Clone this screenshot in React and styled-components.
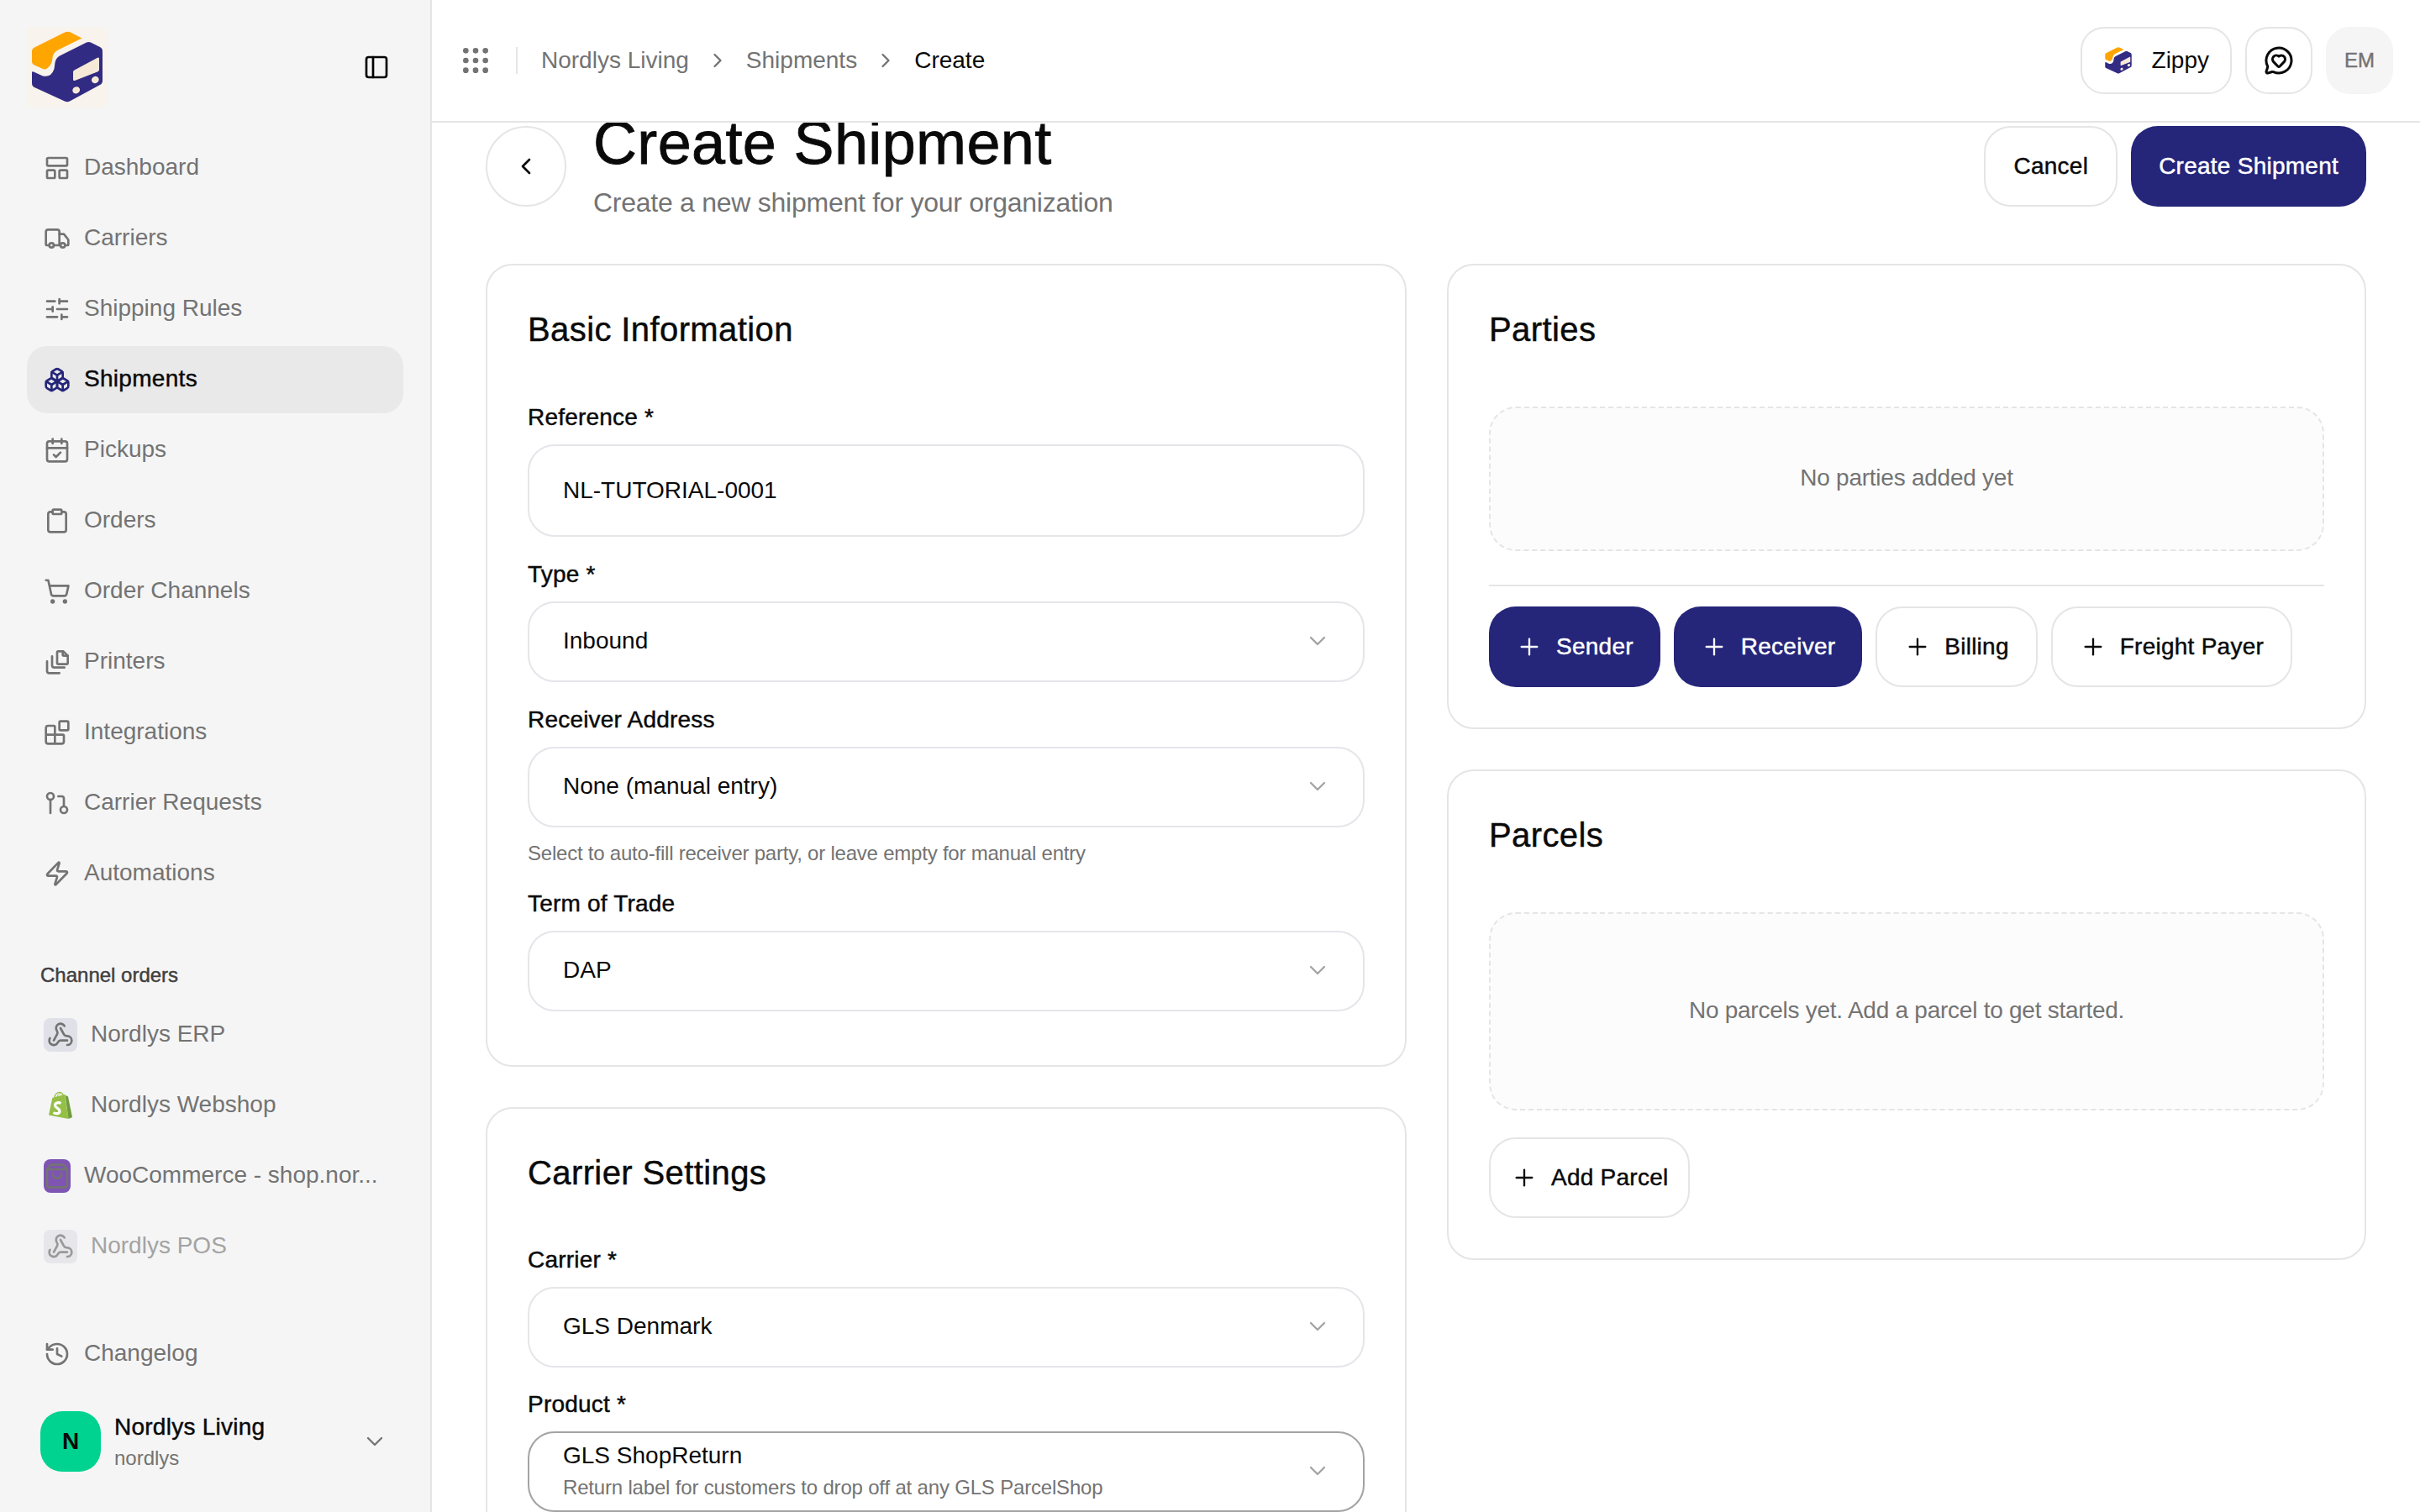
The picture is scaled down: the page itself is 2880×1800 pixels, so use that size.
import React from "react";
import styled, { createGlobalStyle, css } from "styled-components";
import {
  LayoutPanelTop,
  Truck,
  SlidersHorizontal,
  Boxes,
  CalendarCheck,
  Clipboard,
  ShoppingCart,
  Blocks,
  GitPullRequest,
  Zap,
  Webhook,
  ShoppingBag,
  History,
  ChevronDown,
  ChevronRight,
  ChevronLeft,
  PanelLeft,
  Grip,
  MessageCircleHeart,
  Plus,
} from "lucide-react";

const NAVY = "#25257a";
const LINE = "#e5e5e5";
const FIELD_LINE = "#e5e5ea";
const MUTED = "#737373";
const INK = "#0a0a0a";

const medium = css`
  -webkit-text-stroke: 0.45px currentColor;
`;

const GlobalStyle = createGlobalStyle`
  html, body {
    margin: 0;
    background: #fff;
    overflow: hidden;
  }
  * {
    box-sizing: border-box;
  }
  body {
    font-family: "Liberation Sans", Arial, sans-serif;
    color: ${INK};
  }
`;

const Page = styled.div`
  display: flex;
  width: 2880px;
  height: 1800px;
`;

const Sidebar = styled.aside`
  display: flex;
  flex-direction: column;
  flex: 0 0 514px;
  padding: 32px 32px 48px;
  background: #f5f5f5;
  border-right: 2px solid ${LINE};
`;

const LogoRow = styled.div`
  display: flex;
  align-items: center;
  justify-content: space-between;
  height: 96px;
  margin-bottom: 32px;
  padding-right: 16px;
`;

const Nav = styled.nav`
  display: flex;
  flex-direction: column;
  gap: 4px;
`;

const NavItem = styled.div`
  display: flex;
  align-items: center;
  gap: 16px;
  height: 80px;
  padding-left: 20px;
  border-radius: 24px;
  font-size: 28px;
  white-space: nowrap;
  letter-spacing: ${({ $active }) => ($active ? 0.3 : 0)}px;
  color: ${({ $active, $faded }) => ($active ? INK : $faded ? "#a3a3a3" : MUTED)};
  background: ${({ $active }) => ($active ? "#e9e9e9" : "transparent")};
  ${({ $active }) => $active && medium}

  svg {
    flex: none;
    -webkit-text-stroke: 0;
    color: ${({ $active }) => ($active ? NAVY : MUTED)};
  }
`;

const NavLabel = styled.span`
  margin-top: -2px;
`;

const SectionLabel = styled.div`
  margin: 68px 0 18px 16px;
  font-size: 24px;
  line-height: 26px;
  color: #404040;
  ${medium}
`;

const ChannelBadge = styled.span`
  display: flex;
  align-items: center;
  justify-content: center;
  flex: none;
  width: ${({ $w }) => $w ?? 40}px;
  height: 40px;
  border-radius: 8px;
  background: ${({ $bg }) => $bg ?? "transparent"};
  opacity: ${({ $faded }) => ($faded ? 0.7 : 1)};
`;

const Changelog = styled(NavItem)`
  margin-top: auto;
  margin-bottom: 28px;
`;

const OrgRow = styled.div`
  display: flex;
  align-items: center;
  gap: 16px;
  height: 72px;
  padding: 0 18px 0 16px;
  color: ${MUTED};
`;

const OrgAvatar = styled.div`
  display: flex;
  align-items: center;
  justify-content: center;
  flex: none;
  width: 72px;
  height: 72px;
  border-radius: 26px;
  background: #00d390;
  color: ${INK};
  font-size: 28px;
  font-weight: 700;
`;

const OrgText = styled.div`
  flex: 1;
`;

const OrgName = styled.div`
  font-size: 28px;
  line-height: 36px;
  letter-spacing: 0.25px;
  color: ${INK};
  ${medium}
`;

const OrgSlug = styled.div`
  font-size: 24px;
  line-height: 32px;
  margin-top: 3px;
  color: ${MUTED};
`;

const Main = styled.main`
  display: flex;
  flex-direction: column;
  flex: 1;
  min-width: 0;
  height: 1800px;
`;

const Topbar = styled.header`
  display: flex;
  align-items: center;
  flex: 0 0 146px;
  padding: 0 32px;
  border-bottom: 2px solid ${LINE};
`;

const GripIcon = styled(Grip)`
  color: ${MUTED};
`;

const Separator = styled.span`
  width: 2px;
  height: 32px;
  margin: 0 28px;
  background: ${LINE};
`;

const Crumbs = styled.div`
  display: flex;
  align-items: center;
  gap: 20px;
  flex: 1;
  font-size: 28px;
  color: ${MUTED};
`;

const CurrentCrumb = styled.span`
  color: ${INK};
`;

const TopActions = styled.div`
  display: flex;
  align-items: center;
  gap: 16px;
`;

const TopButton = styled.button`
  display: flex;
  align-items: center;
  justify-content: center;
  gap: 22px;
  height: 80px;
  min-width: 80px;
  padding: ${({ $wide }) => ($wide ? "0 25px" : "0")};
  border: 2px solid ${LINE};
  border-radius: 28px;
  background: #fff;
  font: inherit;
  font-size: 28px;
  color: ${INK};
`;

const UserBadge = styled.div`
  display: flex;
  align-items: center;
  justify-content: center;
  width: 80px;
  height: 80px;
  border-radius: 28px;
  background: #f5f5f5;
  font-size: 24px;
  color: ${MUTED};
  ${medium}
`;

const Content = styled.div`
  flex: 1;
  overflow: hidden;
  padding: 0 64px;
`;

const PageHead = styled.div`
  display: flex;
  align-items: center;
  gap: 32px;
  height: 136px;
  margin-top: -16px;
  margin-bottom: 48px;
`;

const BackButton = styled.button`
  display: flex;
  align-items: center;
  justify-content: center;
  flex: none;
  width: 96px;
  height: 96px;
  padding: 0;
  border: 2px solid ${LINE};
  border-radius: 50%;
  background: #fff;
  color: ${INK};
`;

const HeadText = styled.div`
  flex: 1;
  padding-bottom: 2px;
`;

const Title = styled.h1`
  margin: 0;
  font-size: 72px;
  line-height: 80px;
  font-weight: 400;
  letter-spacing: 0.35px;
  -webkit-text-stroke: 0.8px currentColor;
`;

const Subtitle = styled.p`
  margin: 7px 0 0;
  font-size: 32px;
  line-height: 48px;
  letter-spacing: -0.26px;
  color: ${MUTED};
`;

const HeadActions = styled.div`
  display: flex;
  gap: 16px;
`;

const Button = styled.button`
  display: inline-flex;
  align-items: center;
  justify-content: center;
  gap: 16px;
  height: 96px;
  padding: 0 ${({ $pad }) => $pad ?? 32}px 1px;
  border-radius: 32px;
  font: inherit;
  font-size: 28px;
  letter-spacing: 0.25px;
  white-space: nowrap;
  ${medium}
  border: ${({ $primary }) => ($primary ? "none" : `2px solid ${LINE}`)};
  background: ${({ $primary }) => ($primary ? NAVY : "#fff")};
  color: ${({ $primary }) => ($primary ? "#fff" : INK)};

  svg {
    -webkit-text-stroke: 0;
  }
`;

const Columns = styled.div`
  display: grid;
  grid-template-columns: 1096px 1094px;
  gap: 48px;
  align-items: start;
`;

const Column = styled.div`
  display: flex;
  flex-direction: column;
  gap: 48px;
`;

const Card = styled.section`
  padding: 48px;
  border: 2px solid ${LINE};
  border-radius: 32px;
  background: #fff;
`;

const CardTitle = styled.h2`
  margin: 0 0 64px;
  font-size: 40px;
  line-height: 56px;
  font-weight: 400;
  letter-spacing: 0.4px;
  ${medium}
`;

const Fields = styled.div`
  display: flex;
  flex-direction: column;
  gap: ${({ $open }) => ($open ? 31 : 32)}px;
  margin-top: ${({ $open }) => ($open ? -1 : 0)}px;
  padding-bottom: ${({ $open }) => ($open ? 0 : 16)}px;
`;

const Field = styled.div`
  display: flex;
  flex-direction: column;
`;

const Label = styled.label`
  margin-bottom: 19px;
  font-size: 28px;
  line-height: 26px;
  letter-spacing: 0.2px;
  color: ${INK};
  ${medium}
`;

const TextInput = styled.div`
  display: flex;
  align-items: center;
  height: 110px;
  padding: 0 40px;
  border: 2px solid ${FIELD_LINE};
  border-radius: 32px;
  font-size: 28px;
`;

const Select = styled.div`
  display: flex;
  align-items: center;
  justify-content: space-between;
  height: 96px;
  padding: 0 38px 2px 40px;
  border: 2px solid ${({ $focused }) => ($focused ? "#a3a3a3" : FIELD_LINE)};
  border-radius: 32px;
  font-size: 28px;

  svg {
    flex: none;
    color: #a3a3a3;
  }
`;

const OptionDesc = styled.div`
  margin-top: 8px;
  font-size: 24px;
  line-height: 28px;
  letter-spacing: -0.18px;
  color: ${MUTED};
`;

const OptionMain = styled.div`
  line-height: 32px;
`;

const Help = styled.div`
  margin-top: 15px;
  font-size: 24px;
  line-height: 31px;
  letter-spacing: -0.22px;
  color: ${MUTED};
`;

const EmptyBox = styled.div`
  display: flex;
  align-items: center;
  justify-content: center;
  height: ${({ $h }) => $h}px;
  padding-bottom: 2px;
  border: 2px dashed ${LINE};
  border-radius: 32px;
  background: #fcfcfc;
  font-size: 28px;
  letter-spacing: -0.25px;
  color: ${MUTED};
`;

const Divider = styled.div`
  height: 2px;
  margin: 40px 0 24px;
  background: ${LINE};
`;

const ButtonRow = styled.div`
  display: flex;
  gap: 16px;
  margin-top: ${({ $top }) => $top ?? 0}px;
`;

function Logo({ size = 96, glow }) {
  return (
    <svg width={size} height={size} viewBox="0 0 96 96" aria-hidden="true">
      {glow && <rect width="96" height="96" rx="6" fill="#faf1e3" opacity="0.55" />}
      <path
        d="M43 7.500Q48 4.500 53 7L65.500 13.500 37 27.500Q31 30.500 30.500 37 30 45 24 49.500 22 51 19 50L9 45.500Q6 44 6 41V29Q6 26 9 24.500Z"
        fill="#ffa500"
      />
      <path
        d="M71 18.500Q73.500 17.300 76 18.500L87 24Q90 25.500 90 29V64Q90 67.500 87 69L51 88.500Q48 90 45 88.500L9 72Q6 70.500 6 67V54.500Q6 52.500 8 53.500L19 58.500Q29 60.500 32.500 50L33.500 42.500Q34.500 37 39 34.500Z"
        fill="#322b83"
      />
      <path d="M56.500 51.500L84 36.700Q86 36 86 38V51Q86 52.500 84.500 53.200L57 64Q55 64.500 55 62.500V53.500Q55 52.300 56.500 51.500Z" fill="#f7e9d7" />
      <ellipse cx="58.700" cy="75.300" rx="4.500" ry="4" transform="rotate(-28 58.700 75.300)" fill="#f7e9d7" />
      <ellipse cx="81.300" cy="63" rx="4.500" ry="4" transform="rotate(-28 81.300 63)" fill="#f7e9d7" />
    </svg>
  );
}

function PrinterFiles({ size = 32 }) {
  return (
    <svg width={size} height={size} viewBox="0 0 24 24" fill="none" stroke="currentColor" strokeWidth="2" strokeLinecap="round" strokeLinejoin="round" aria-hidden="true">
      <path d="M13 2.500h4.500l4 4v6.500a1 1 0 0 1-1 1H13a1 1 0 0 1-1-1V3.500a1 1 0 0 1 1-1z" />
      <path d="M17 2.500v3a1 1 0 0 0 1 1h3.500" />
      <path d="M7.500 7v8a2 2 0 0 0 2 2h9" />
      <path d="M3 11.500V20a2 2 0 0 0 2 2h9" />
    </svg>
  );
}

function ShopifyBag() {
  return (
    <svg width="30" height="34" viewBox="0 0 30 34" aria-hidden="true">
      <path d="M7.500 8C9 2.500 12 1 15 1.500 17 2 18 3.500 18.500 5.500" fill="none" stroke="#95bf47" strokeWidth="1.200" />
      <path d="M11 7C12 3.500 14 2.300 16 3" fill="none" stroke="#95bf47" strokeWidth="1" />
      <path d="M5.300 8L20 3.800 24.500 33 1 28.500Z" fill="#95bf47" />
      <path d="M20.500 4.500L24 6.500 29 31 24.500 33Z" fill="#6f9c3c" />
      <path d="M15.500 14.500C13 13 8.500 13.500 8.500 17 8.500 20.500 14 20 14 24 14 27 9.500 27.500 6.500 25.500" fill="none" stroke="#fff" strokeWidth="3.200" />
    </svg>
  );
}

const navLinks = [
  { label: "Dashboard", icon: <LayoutPanelTop size={32} /> },
  { label: "Carriers", icon: <Truck size={32} /> },
  { label: "Shipping Rules", icon: <SlidersHorizontal size={32} /> },
  { label: "Shipments", icon: <Boxes size={32} />, active: true },
  { label: "Pickups", icon: <CalendarCheck size={32} /> },
  { label: "Orders", icon: <Clipboard size={32} /> },
  { label: "Order Channels", icon: <ShoppingCart size={32} /> },
  { label: "Printers", icon: <PrinterFiles /> },
  { label: "Integrations", icon: <Blocks size={32} /> },
  { label: "Carrier Requests", icon: <GitPullRequest size={32} /> },
  { label: "Automations", icon: <Zap size={32} /> },
];

function SelectField({ label, value, help }) {
  return (
    <Field>
      <Label>{label}</Label>
      <Select>
        {value}
        <ChevronDown size={32} strokeWidth={1.75} />
      </Select>
      {help && <Help>{help}</Help>}
    </Field>
  );
}

export default function App() {
  return (
    <>
      <GlobalStyle />
      <Page>
        <Sidebar>
          <LogoRow>
            <Logo glow />
            <PanelLeft size={32} color="#000" />
          </LogoRow>
          <Nav>
            {navLinks.map((link) => (
              <NavItem key={link.label} $active={link.active}>
                {link.icon}
                <NavLabel>{link.label}</NavLabel>
              </NavItem>
            ))}
          </Nav>
          <SectionLabel>Channel orders</SectionLabel>
          <Nav>
            <NavItem>
              <ChannelBadge $bg="#e0e0e8">
                <Webhook size={32} />
              </ChannelBadge>
              <NavLabel>Nordlys ERP</NavLabel>
            </NavItem>
            <NavItem>
              <ChannelBadge>
                <ShopifyBag />
              </ChannelBadge>
              <NavLabel>Nordlys Webshop</NavLabel>
            </NavItem>
            <NavItem>
              <ChannelBadge $w={32} $bg="#7f54b3">
                <ShoppingBag size={32} />
              </ChannelBadge>
              <NavLabel>WooCommerce - shop.nor...</NavLabel>
            </NavItem>
            <NavItem $faded>
              <ChannelBadge $bg="#e0e0e8" $faded>
                <Webhook size={32} />
              </ChannelBadge>
              <NavLabel>Nordlys POS</NavLabel>
            </NavItem>
          </Nav>
          <Changelog>
            <History size={32} />
            <NavLabel>Changelog</NavLabel>
          </Changelog>
          <OrgRow>
            <OrgAvatar>N</OrgAvatar>
            <OrgText>
              <OrgName>Nordlys Living</OrgName>
              <OrgSlug>nordlys</OrgSlug>
            </OrgText>
            <ChevronDown size={32} strokeWidth={1.75} />
          </OrgRow>
        </Sidebar>

        <Main>
          <Topbar>
            <GripIcon size={40} />
            <Separator />
            <Crumbs>
              Nordlys Living
              <ChevronRight size={28} />
              Shipments
              <ChevronRight size={28} />
              <CurrentCrumb>Create</CurrentCrumb>
            </Crumbs>
            <TopActions>
              <TopButton $wide>
                <Logo size={36} />
                Zippy
              </TopButton>
              <TopButton>
                <MessageCircleHeart size={36} />
              </TopButton>
              <UserBadge>EM</UserBadge>
            </TopActions>
          </Topbar>

          <Content>
            <PageHead>
              <BackButton>
                <ChevronLeft size={32} />
              </BackButton>
              <HeadText>
                <Title>Create Shipment</Title>
                <Subtitle>Create a new shipment for your organization</Subtitle>
              </HeadText>
              <HeadActions>
                <Button $pad={33}>Cancel</Button>
                <Button $primary $pad={33}>
                  Create Shipment
                </Button>
              </HeadActions>
            </PageHead>

            <Columns>
              <Column>
                <Card>
                  <CardTitle>Basic Information</CardTitle>
                  <Fields>
                    <Field>
                      <Label>Reference *</Label>
                      <TextInput>NL-TUTORIAL-0001</TextInput>
                    </Field>
                    <SelectField label="Type *" value="Inbound" />
                    <SelectField
                      label="Receiver Address"
                      value="None (manual entry)"
                      help="Select to auto-fill receiver party, or leave empty for manual entry"
                    />
                    <SelectField label="Term of Trade" value="DAP" />
                  </Fields>
                </Card>
                <Card>
                  <CardTitle>Carrier Settings</CardTitle>
                  <Fields $open>
                    <SelectField label="Carrier *" value="GLS Denmark" />
                    <Field>
                      <Label>Product *</Label>
                      <Select $focused>
                        <div>
                          <OptionMain>GLS ShopReturn</OptionMain>
                          <OptionDesc>Return label for customers to drop off at any GLS ParcelShop</OptionDesc>
                        </div>
                        <ChevronDown size={32} strokeWidth={1.75} />
                      </Select>
                    </Field>
                  </Fields>
                </Card>
              </Column>

              <Column>
                <Card>
                  <CardTitle>Parties</CardTitle>
                  <EmptyBox $h={172}>No parties added yet</EmptyBox>
                  <Divider />
                  <ButtonRow>
                    <Button $primary>
                      <Plus size={32} strokeWidth={1.75} />
                      Sender
                    </Button>
                    <Button $primary>
                      <Plus size={32} strokeWidth={1.75} />
                      Receiver
                    </Button>
                    <Button>
                      <Plus size={32} strokeWidth={1.75} />
                      Billing
                    </Button>
                    <Button>
                      <Plus size={32} strokeWidth={1.75} />
                      Freight Payer
                    </Button>
                  </ButtonRow>
                </Card>
                <Card>
                  <CardTitle>Parcels</CardTitle>
                  <EmptyBox $h={236}>No parcels yet. Add a parcel to get started.</EmptyBox>
                  <ButtonRow $top={32}>
                    <Button $pad={24}>
                      <Plus size={32} strokeWidth={1.75} />
                      Add Parcel
                    </Button>
                  </ButtonRow>
                </Card>
              </Column>
            </Columns>
          </Content>
        </Main>
      </Page>
    </>
  );
}
